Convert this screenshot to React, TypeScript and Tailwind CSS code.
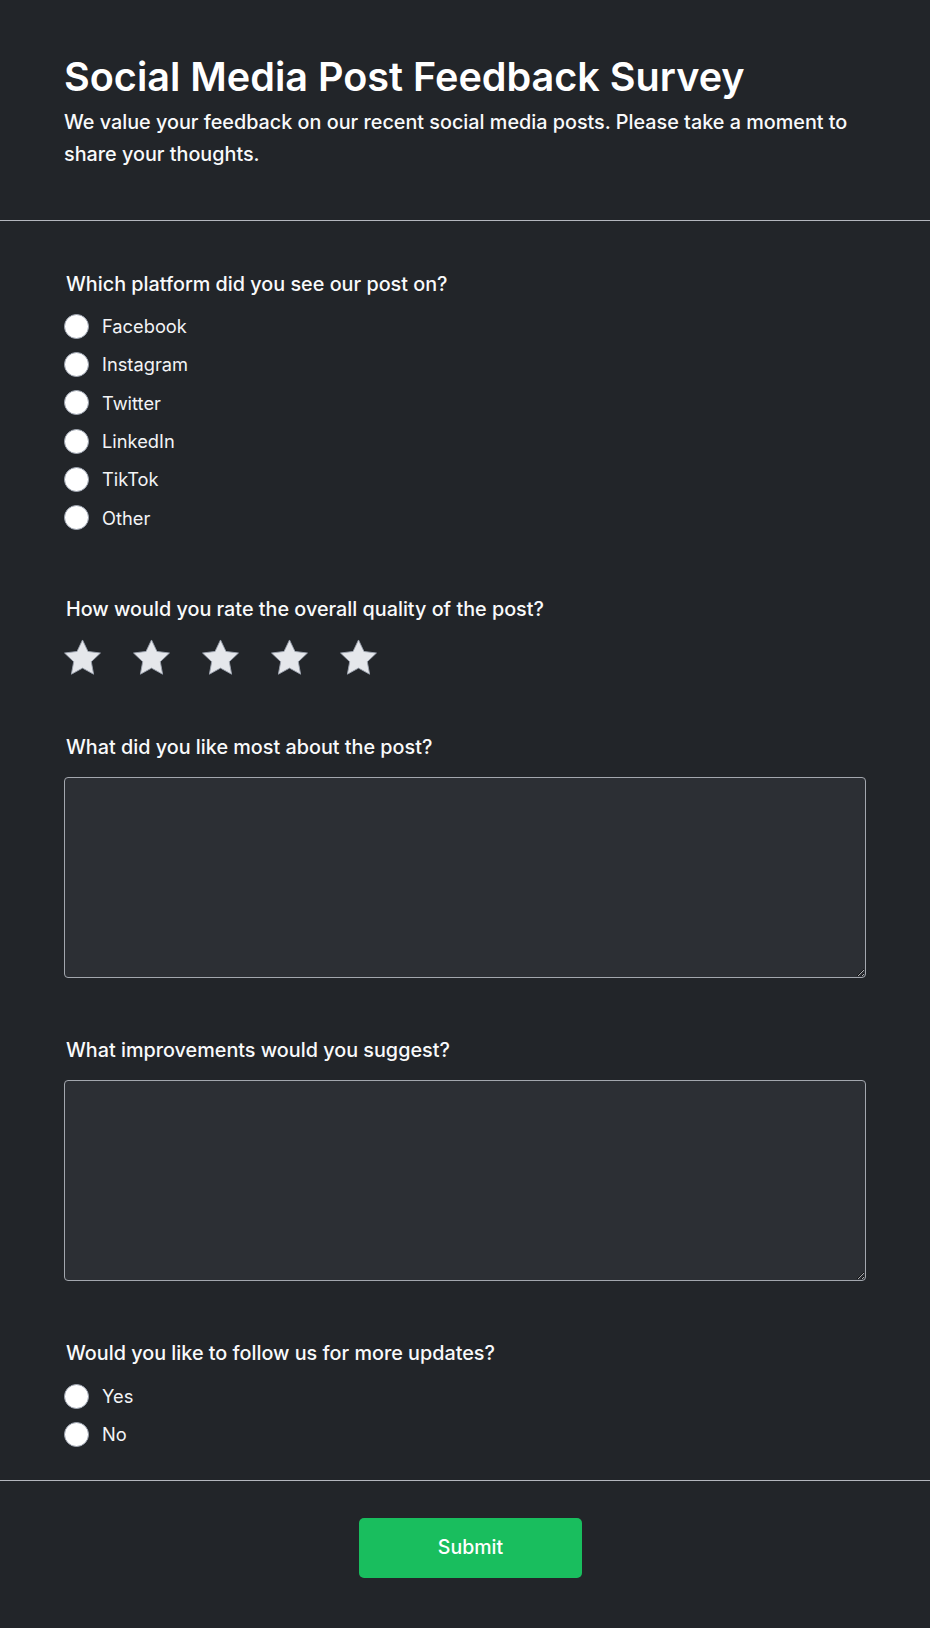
import React from 'react';

const platforms = ['Facebook', 'Instagram', 'Twitter', 'LinkedIn', 'TikTok', 'Other'];

const Radio: React.FC<{ label: string }> = ({ label }) => (
  <label className="flex items-center h-[38.33px] cursor-pointer">
    <span className="w-[25px] h-[25px] rounded-full bg-white border border-[#9ca3af] shrink-0" />
    <span className="ml-[13px] text-[18.3px] leading-[28px] text-[#f3f4f6]">{label}</span>
  </label>
);

const Star = () => (
  <svg width="37" height="36" viewBox="2 1.8 20 19.2" className="shrink-0">
    <path
      d="M12 2.2l2.95 6.2 6.75.85-4.95 4.7 1.25 6.75L12 17.4l-6 3.3 1.25-6.75L2.3 9.25l6.75-.85z"
      fill="#e5e7eb"
      stroke="#9ca3af"
      strokeWidth="0.5"
      strokeLinejoin="round"
    />
  </svg>
);

const Question: React.FC<{ children: React.ReactNode }> = ({ children }) => (
  <h2 className="pl-[2px] text-[19.8px] leading-[28px] font-medium text-[#f9fafb]">{children}</h2>
);

export default function App() {
  return (
    <div className="min-h-[1628px] bg-[#222529] text-white" style={{ fontFamily: 'Inter, "Noto Sans", sans-serif' }}>
      <header className="px-16 pt-[53px] pb-[50px] border-b border-[#b4b7be]">
        <h1 className="text-[39.6px] leading-[48px] font-semibold text-white">Social Media Post Feedback Survey</h1>
        <p className="mt-[5px] text-[19.8px] leading-[32px] font-medium text-[#f9fafb]">
          We value your feedback on our recent social media posts. Please take a moment to share your thoughts.
        </p>
      </header>

      <main className="px-16 pt-[49px] pb-[26px] border-b border-[#b4b7be] flex flex-col gap-[58px]">
        <section>
          <Question>Which platform did you see our post on?</Question>
          <div className="mt-[9px] flex flex-col">
            {platforms.map(p => (
              <Radio key={p} label={p} />
            ))}
          </div>
        </section>

        <section>
          <Question>How would you rate the overall quality of the post?</Question>
          <div className="mt-[16px] flex items-center gap-[32px] h-[36px]">
            {[0, 1, 2, 3, 4].map(i => (
              <Star key={i} />
            ))}
          </div>
        </section>

        <section>
          <Question>What did you like most about the post?</Question>
          <textarea className="mt-[16px] block w-full h-[201px] rounded-[4px] bg-[#2c2f34] border border-[#a3a7ae] text-white p-2 outline-none" />
        </section>

        <section>
          <Question>What improvements would you suggest?</Question>
          <textarea className="mt-[16px] block w-full h-[201px] rounded-[4px] bg-[#2c2f34] border border-[#a3a7ae] text-white p-2 outline-none" />
        </section>

        <section>
          <Question>Would you like to follow us for more updates?</Question>
          <div className="mt-[10px] flex flex-col">
            <Radio label="Yes" />
            <Radio label="No" />
          </div>
        </section>
      </main>

      <footer className="pt-[37px] pb-[50px] flex justify-center">
        <button className="ml-[11px] w-[223px] h-[60px] rounded-[5px] bg-[#19be5e] text-white text-[19.5px] font-medium">
          Submit
        </button>
      </footer>
    </div>
  );
}
